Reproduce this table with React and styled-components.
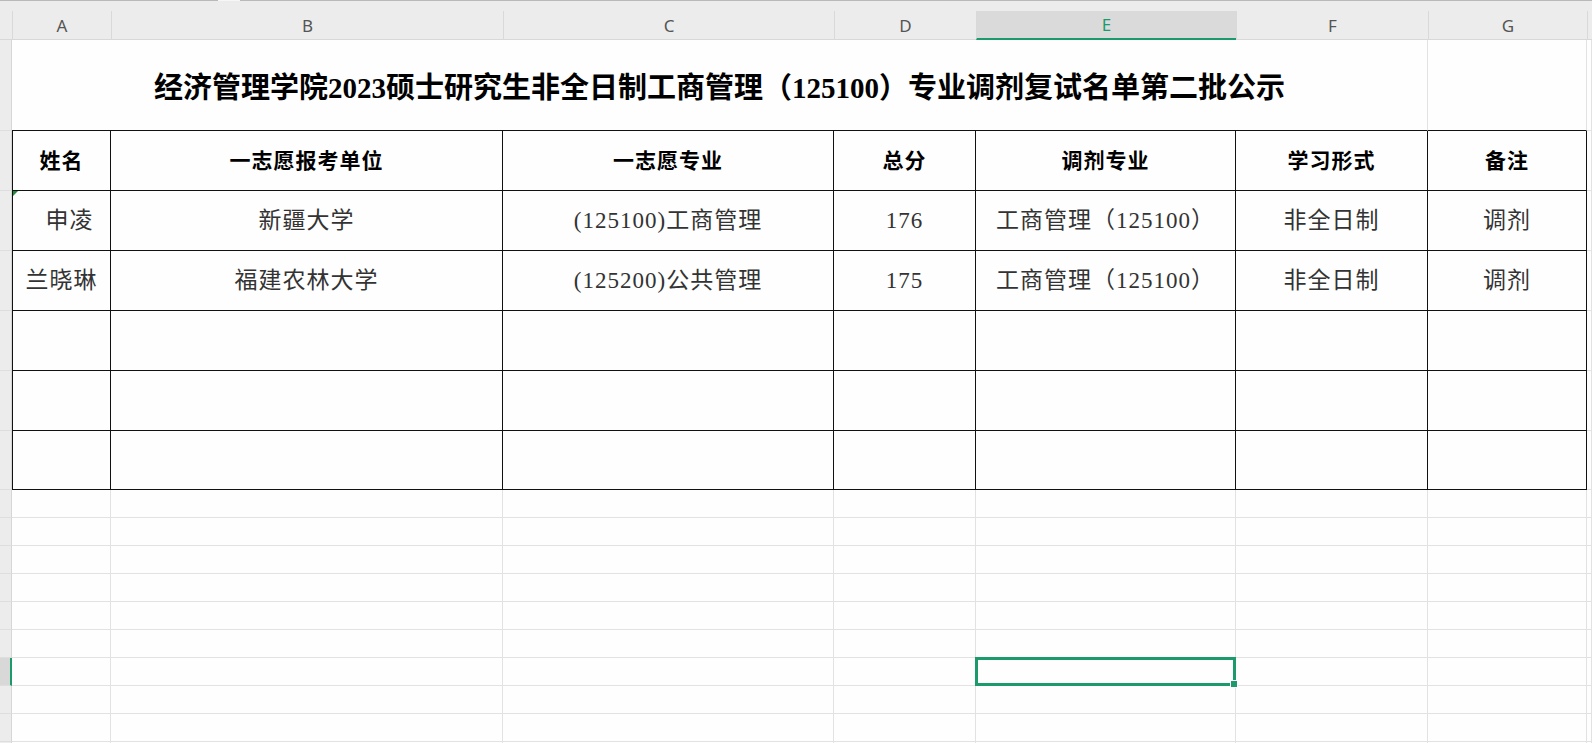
import React from "react";
import styled, { createGlobalStyle, css } from "styled-components";

const GREEN = "#1b9a6b";
const GRID = "#e2e2e2";
const RULE = "#111";

const letters = ["A", "B", "C", "D", "E", "F", "G"];
const widths = [99, 392, 331, 142, 260, 192, 159];

const headings = ["姓名", "一志愿报考单位", "一志愿专业", "总分", "调剂专业", "学习形式", "备注"];

const people = [
  { cells: ["申凌", "新疆大学", "(125100)工商管理", "176", "工商管理（125100）", "非全日制", "调剂"], indent: true, flag: true },
  { cells: ["兰晓琳", "福建农林大学", "(125200)公共管理", "175", "工商管理（125100）", "非全日制", "调剂"] },
  { cells: ["", "", "", "", "", "", ""] },
  { cells: ["", "", "", "", "", "", ""] },
  { cells: ["", "", "", "", "", "", ""] },
];

const ACTIVE_COL = 4;
const ACTIVE_ROW = 6;

const GlobalStyle = createGlobalStyle`
  html, body { margin: 0; padding: 0; background: #fff; overflow: hidden; }
  body { font-family: "Liberation Serif", "Noto Sans CJK SC", serif; }
`;

const Window = styled.div`
  width: 1592px;
  height: 743px;
  overflow: hidden;
  display: flex;
  flex-direction: column;
  background: #fefefe;
`;

const TabBar = styled.div`
  height: 11px;
  flex: none;
  display: flex;
  background: #ececec;
`;

const TabEdge = styled.div`
  width: ${p => (p.$w ? p.$w + "px" : "auto")};
  flex: ${p => (p.$w ? "none" : 1)};
  border-top: 1px solid ${p => (p.$notch ? "#f6f6f6" : "#b9b9b9")};
`;

const Sheet = styled.div`
  flex: 1;
  display: grid;
  grid-template-columns: 12px ${widths.map(w => w + "px").join(" ")} 1fr;
  grid-template-rows: 29px 91px repeat(5, 60px) 59px;
  grid-auto-rows: 28px;
`;

const Corner = styled.div`
  background: #ececec;
  border-bottom: 1px solid #d8d8d8;
`;

const ColHead = styled.div`
  box-sizing: border-box;
  display: flex;
  align-items: center;
  justify-content: center;
  background: ${p => (p.$active ? "#dadada" : "#ececec")};
  border-left: 1px solid #d9d9d9;
  border-bottom: ${p => (p.$active ? `2px solid ${GREEN}` : "1px solid #d8d8d8")};
  font-family: "Noto Sans", "Liberation Sans", sans-serif;
  font-size: 17px;
  color: ${p => (p.$active ? GREEN : "#555")};
`;

const RowHead = styled.div`
  box-sizing: border-box;
  background: ${p => (p.$active ? "#d8d8d8" : "#ececec")};
  border-right: ${p => (p.$active ? `2px solid ${GREEN}` : "1px solid #d6d6d6")};
  border-bottom: 1px solid #dedede;
`;

const Cell = styled.div`
  box-sizing: border-box;
  position: relative;
  display: flex;
  align-items: center;
  justify-content: center;
  min-width: 0;
  white-space: nowrap;
  border-right: 1px solid ${p => (p.$ruled ? RULE : GRID)};
  border-bottom: 1px solid ${p => (p.$ruled || p.$underRuled ? RULE : GRID)};
  ${p => p.$leftRule && css`border-left: 1px solid ${RULE};`}
  ${p =>
    p.$selected &&
    css`
      z-index: 1;
      &::before {
        content: "";
        position: absolute;
        top: -1px;
        left: -1px;
        right: -1px;
        bottom: -1px;
        border: 3px solid ${GREEN};
      }
      &::after {
        content: "";
        position: absolute;
        right: -3px;
        bottom: -3px;
        width: 6px;
        height: 6px;
        background: ${GREEN};
        border: 1px solid #fff;
      }
    `}
`;

const TitleCell = styled(Cell)`
  grid-column: span 6;
  border-right-color: ${GRID};
  padding-top: 6px;
  font-size: 29px;
  font-weight: 700;
  color: #000;
  line-height: 1;
`;

const HeadCell = styled(Cell)`
  font-size: 21px;
  font-weight: 700;
  letter-spacing: 1px;
  color: #000;
  line-height: 1;
  padding-top: 2px;
`;

const DataCell = styled(Cell)`
  font-size: 23px;
  letter-spacing: 1px;
  color: #333;
  line-height: 1;
  padding-left: ${p => (p.$indent ? "16px" : "0")};
  ${p =>
    p.$flag &&
    css`
      &::before {
        content: "";
        position: absolute;
        top: 0;
        left: 0;
        border-top: 5px solid #1f8a3c;
        border-right: 5px solid transparent;
      }
    `}
`;

function Spreadsheet() {
  const plainRows = Array.from({ length: 10 }, (_, i) => i);

  return (
    <Sheet>
      <Corner />
      {letters.map((l, i) => (
        <ColHead key={l} $active={i === ACTIVE_COL}>{l}</ColHead>
      ))}
      <ColHead />

      <RowHead />
      <TitleCell $underRuled>
        经济管理学院2023硕士研究生非全日制工商管理（125100）专业调剂复试名单第二批公示
      </TitleCell>
      <Cell $underRuled />
      <Cell />

      <RowHead />
      {headings.map((h, i) => (
        <HeadCell key={h} $ruled $leftRule={i === 0}>{h}</HeadCell>
      ))}
      <Cell />

      {people.map((p, r) => (
        <React.Fragment key={r}>
          <RowHead />
          {p.cells.map((text, i) => (
            <DataCell
              key={i}
              $ruled
              $leftRule={i === 0}
              $indent={i === 0 && p.indent}
              $flag={i === 0 && p.flag}
            >
              {text}
            </DataCell>
          ))}
          <Cell />
        </React.Fragment>
      ))}

      {plainRows.map(r => (
        <React.Fragment key={"p" + r}>
          <RowHead $active={r === ACTIVE_ROW} />
          {letters.map((l, i) => (
            <Cell key={l} $selected={r === ACTIVE_ROW && i === ACTIVE_COL} />
          ))}
          <Cell />
        </React.Fragment>
      ))}
    </Sheet>
  );
}

export default function App() {
  return (
    <Window>
      <GlobalStyle />
      <TabBar>
        <TabEdge $w={218} />
        <TabEdge $w={22} $notch />
        <TabEdge />
      </TabBar>
      <Spreadsheet />
    </Window>
  );
}
